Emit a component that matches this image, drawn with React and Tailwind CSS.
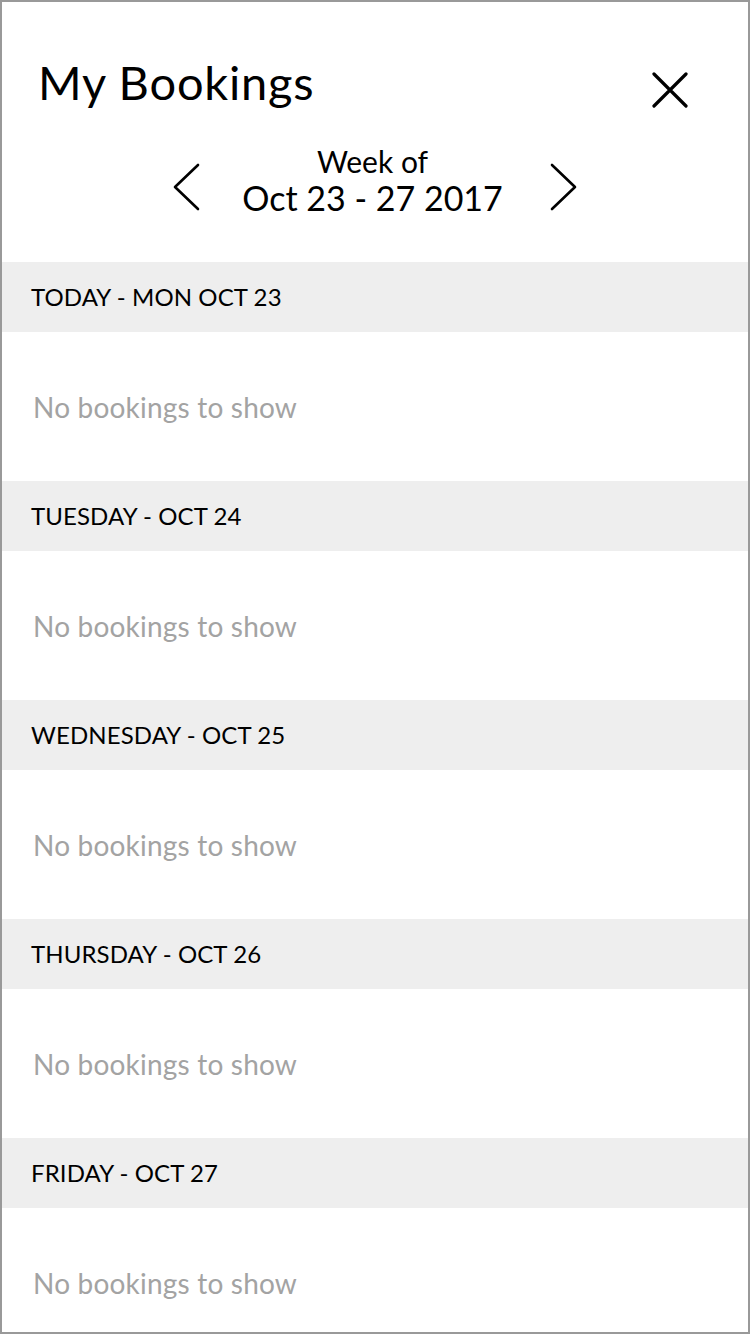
import React from 'react';

const days = [
    'TODAY - MON OCT 23',
    'TUESDAY - OCT 24',
    'WEDNESDAY - OCT 25',
    'THURSDAY - OCT 26',
    'FRIDAY - OCT 27',
];

function Chevron({ dir }) {
    return (
        <svg width="28" height="48" viewBox="0 0 28 48" fill="none" stroke="#000" strokeWidth="2.6" strokeLinecap="round" strokeLinejoin="round">
            {dir === 'left' ? <path d="M26 2 L3 24 L26 46" /> : <path d="M2 2 L25 24 L2 46" />}
        </svg>
    );
}

export default function App() {
    return (
        <div className="w-[750px] h-[1334px] overflow-hidden bg-white border-2 border-[#999999] font-['Lato',sans-serif] text-black">
            <div className="flex items-start justify-between pl-[36px] pr-[60px] pt-[51px] h-[130px]">
                <h1 className="text-[47px] leading-[58px] font-normal tracking-[0.8px]">My Bookings</h1>
                <svg className="mt-[19px]" width="36" height="36" viewBox="0 0 36 36" fill="none" stroke="#000" strokeWidth="3.2" strokeLinecap="round">
                    <path d="M2 2 L34 34 M34 2 L2 34" />
                </svg>
            </div>

            <div className="flex items-start justify-center h-[130px] pt-[12px]">
                <div className="mt-[19px] mr-[42px]"><Chevron dir="left" /></div>
                <div className="flex flex-col items-center">
                    <span className="text-[30px] leading-[34px]">Week of</span>
                    <span className="text-[34px] leading-[42px] -mt-[1px]">Oct 23 - 27 2017</span>
                </div>
                <div className="mt-[19px] ml-[47px]"><Chevron dir="right" /></div>
            </div>

            {days.map((d) => (
                <div key={d}>
                    <div className="h-[70px] bg-[#eeeeee] flex items-center pl-[29px] text-[24px] tracking-[0.1px]">{d}</div>
                    <div className="h-[149px] flex items-center pl-[31px] text-[28px] tracking-[0.2px] text-[#a3a3a3]">No bookings to show</div>
                </div>
            ))}
        </div>
    );
}
